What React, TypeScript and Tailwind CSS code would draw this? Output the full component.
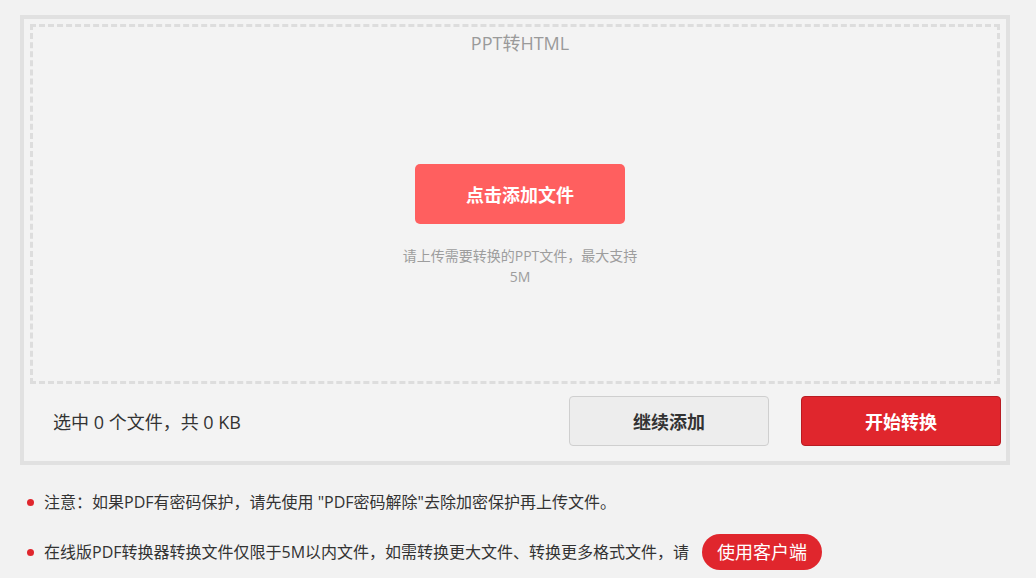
export default function App() {
  const font = { fontFamily: '"Open Sans", "Noto Sans CJK SC", sans-serif' };
  return (
    <div className="min-h-[578px] w-[1036px] bg-[#f2f2f2] pt-[15px]" style={font}>
      <div className="ml-[20px] w-[990px] border-4 border-[#e1e1e1] bg-[#f3f3f3] px-[6px] pt-[5px] pb-[15px]">
        <div className="flex h-[360px] flex-col items-center border-[3px] border-dashed border-[#dddddd] pl-[10px]">
          <div className="mt-[5px] h-[22px] text-[18px] leading-[22px] text-[#9a9a9a]">PPT转HTML</div>
          <button className="mt-[110px] h-[60px] w-[210px] rounded-[5px] bg-[#ff5f5f] pt-[2px] text-[18px] font-bold text-white">
            点击添加文件
          </button>
          <p className="mt-[21px] w-[240px] text-center text-[14px] leading-[21px] text-[#9d9d9d]">
            请上传需要转换的PPT文件，最大支持5M
          </p>
        </div>
        <div className="mt-[12px] mr-[-1px] flex items-center justify-between">
          <div className="pt-[3px] pl-[23px] text-[18px] text-[#333]">选中 0 个文件，共 0 KB</div>
          <div className="flex gap-[32px]">
            <button className="h-[50px] w-[200px] rounded-[4px] border border-[#cfcfcf] bg-[#ededed] pt-[3px] text-[18px] font-bold text-[#333]">
              继续添加
            </button>
            <button className="h-[50px] w-[200px] rounded-[4px] border border-[#b81c22] bg-[#e0262d] pt-[3px] text-[18px] font-bold text-white">
              开始转换
            </button>
          </div>
        </div>
      </div>
      <ul className="mt-[19px] flex flex-col gap-[14px] pl-[27px] text-[16px] text-[#333]">
        <li className="flex h-[36px] items-center">
          <span className="mr-[10px] h-[7px] w-[7px] rounded-full bg-[#e0262d]" />
          注意：如果PDF有密码保护，请先使用 "PDF密码解除"去除加密保护再上传文件。
        </li>
        <li className="flex h-[36px] items-center">
          <span className="mr-[10px] h-[7px] w-[7px] rounded-full bg-[#e0262d]" />
          在线版PDF转换器转换文件仅限于5M以内文件，如需转换更大文件、转换更多格式文件，请
          <button className="ml-[13px] h-[36px] w-[120px] rounded-full bg-[#e0262d] pt-[1px] text-[18px] text-white">
            使用客户端
          </button>
        </li>
      </ul>
    </div>
  );
}
